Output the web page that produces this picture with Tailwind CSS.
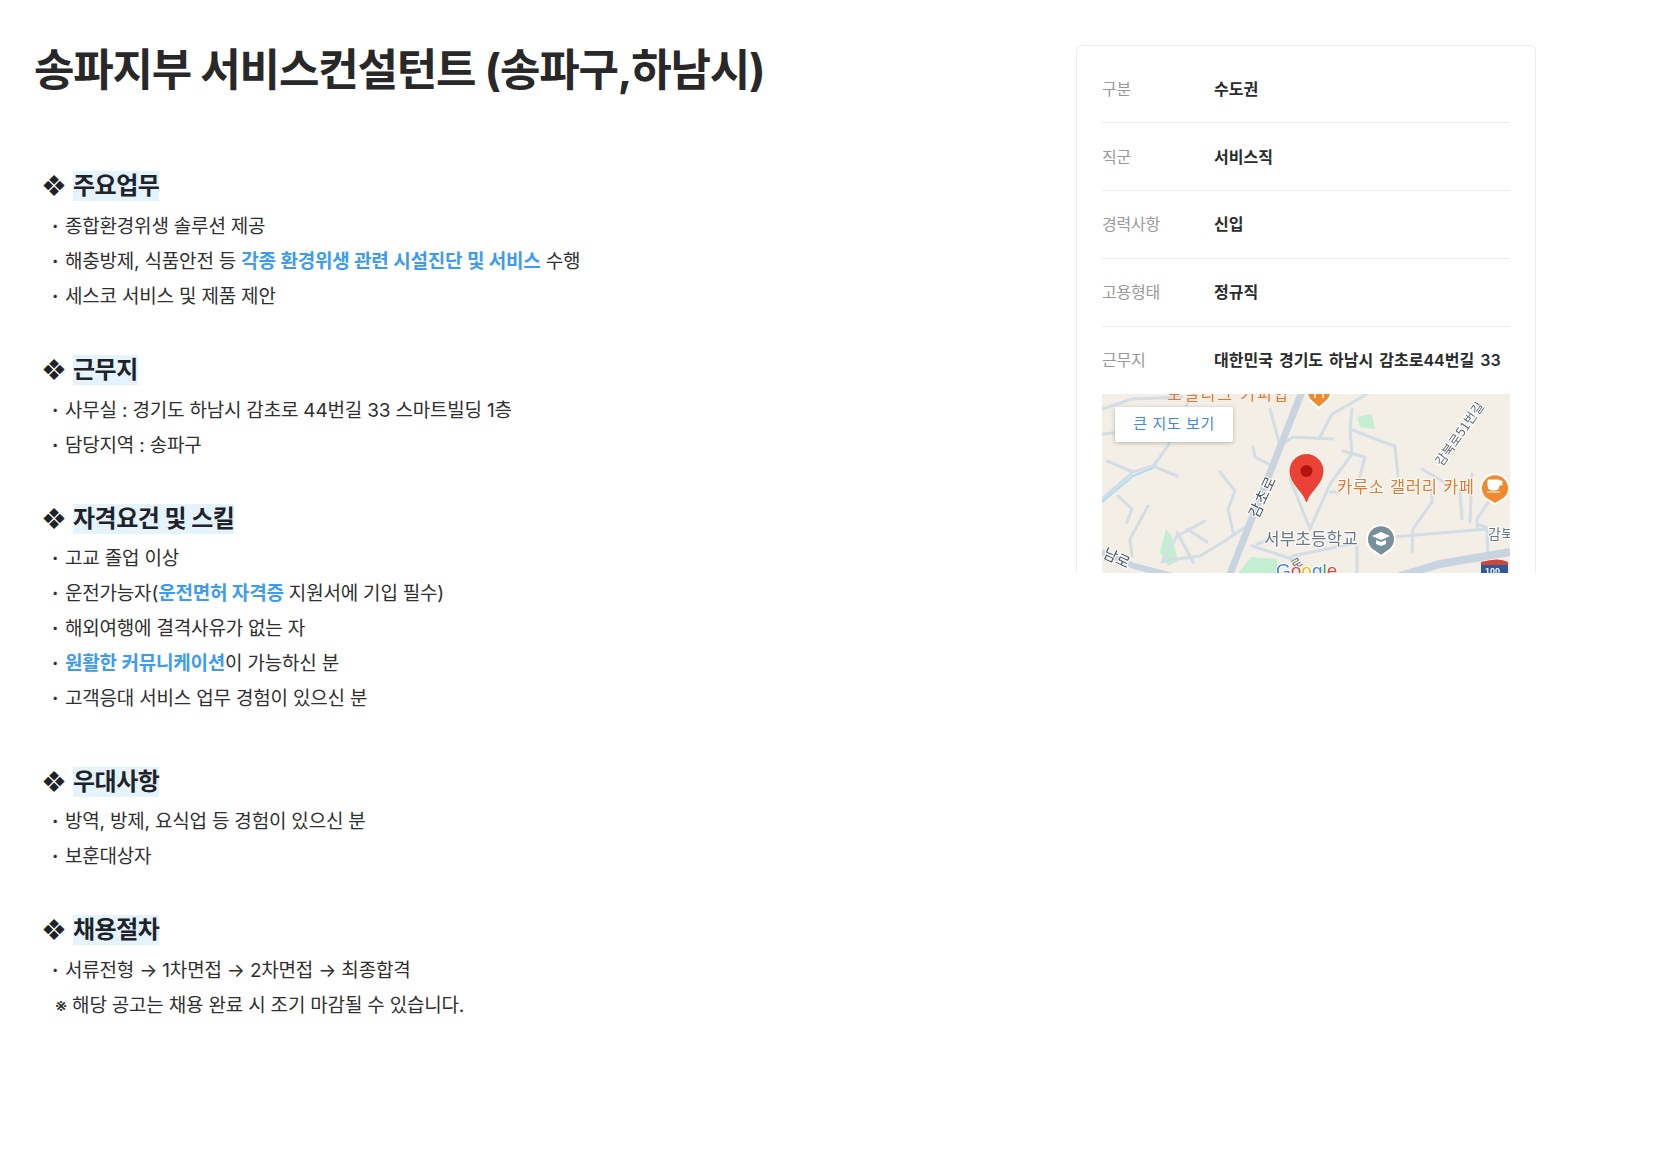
<!DOCTYPE html>
<html lang="ko">
<head>
    <meta charset="UTF-8">
    <title>송파지부 서비스컨설턴트</title>
    <script src="https://cdn.jsdelivr.net/npm/@tailwindcss/browser@4"></script>
</head>
<body class="bg-white text-[#2f2f2f] font-['Inter','Noto_Sans_CJK_KR',sans-serif]">
    <div class="flex items-start h-[1176px] overflow-hidden">
        <!-- 공고 본문 -->
        <main class="w-[1076px] shrink-0 pl-[36px] pt-[38px]">
            <h1 class="-ml-[2px] text-[44px] leading-[64px] font-bold tracking-[-1.2px] text-[#282828]">송파지부 서비스컨설턴트 (송파구,하남시)</h1>

            <section class="pt-[69px]">
                <h2 class="flex items-center h-[30px] pl-[5px] text-[24px] font-bold text-[#1f2328] tracking-[-0.5px]">
                    <span class="w-[32px] font-['DejaVu_Sans'] text-[29px] leading-none">❖</span>
                    <span class="bg-[#e5f3fe] leading-[30px]">주요업무</span>
                </h2>
                <ul class="mt-[8px] text-[19px] leading-[35px] tracking-[-0.2px]">
                    <li class="flex"><span class="w-[29px] pl-[16px] font-bold">·</span><span>종합환경위생 솔루션 제공</span></li>
                    <li class="flex"><span class="w-[29px] pl-[16px] font-bold">·</span><span>해충방제, 식품안전 등 <b class="font-semibold text-[#3c9cf2]">각종 환경위생 관련 시설진단 및 서비스</b> 수행</span></li>
                    <li class="flex"><span class="w-[29px] pl-[16px] font-bold">·</span><span>세스코 서비스 및 제품 제안</span></li>
                </ul>
            </section>

            <section class="pt-[41px]">
                <h2 class="flex items-center h-[30px] pl-[5px] text-[24px] font-bold text-[#1f2328] tracking-[-0.5px]">
                    <span class="w-[32px] font-['DejaVu_Sans'] text-[29px] leading-none">❖</span>
                    <span class="bg-[#e5f3fe] leading-[30px]">근무지</span>
                </h2>
                <ul class="mt-[8px] text-[19px] leading-[35px] tracking-[-0.2px]">
                    <li class="flex"><span class="w-[29px] pl-[16px] font-bold">·</span><span>사무실 : 경기도 하남시 감초로 44번길 33 스마트빌딩 1층</span></li>
                    <li class="flex"><span class="w-[29px] pl-[16px] font-bold">·</span><span>담당지역 : 송파구</span></li>
                </ul>
            </section>

            <section class="pt-[41px]">
                <h2 class="flex items-center h-[30px] pl-[5px] text-[24px] font-bold text-[#1f2328] tracking-[-0.5px]">
                    <span class="w-[32px] font-['DejaVu_Sans'] text-[29px] leading-none">❖</span>
                    <span class="bg-[#e5f3fe] leading-[30px]">자격요건 및 스킬</span>
                </h2>
                <ul class="mt-[7px] text-[19px] leading-[35px] tracking-[-0.2px]">
                    <li class="flex"><span class="w-[29px] pl-[16px] font-bold">·</span><span>고교 졸업 이상</span></li>
                    <li class="flex"><span class="w-[29px] pl-[16px] font-bold">·</span><span>운전가능자(<b class="font-semibold text-[#3c9cf2]">운전면허 자격증</b> 지원서에 기입 필수)</span></li>
                    <li class="flex"><span class="w-[29px] pl-[16px] font-bold">·</span><span>해외여행에 결격사유가 없는 자</span></li>
                    <li class="flex"><span class="w-[29px] pl-[16px] font-bold">·</span><span><b class="font-semibold text-[#3c9cf2]">원활한 커뮤니케이션</b>이 가능하신 분</span></li>
                    <li class="flex"><span class="w-[29px] pl-[16px] font-bold">·</span><span>고객응대 서비스 업무 경험이 있으신 분</span></li>
                </ul>
            </section>

            <section class="pt-[51px]">
                <h2 class="flex items-center h-[30px] pl-[5px] text-[24px] font-bold text-[#1f2328] tracking-[-0.5px]">
                    <span class="w-[32px] font-['DejaVu_Sans'] text-[29px] leading-none">❖</span>
                    <span class="bg-[#e5f3fe] leading-[30px]">우대사항</span>
                </h2>
                <ul class="mt-[7px] text-[19px] leading-[35px] tracking-[-0.2px]">
                    <li class="flex"><span class="w-[29px] pl-[16px] font-bold">·</span><span>방역, 방제, 요식업 등 경험이 있으신 분</span></li>
                    <li class="flex"><span class="w-[29px] pl-[16px] font-bold">·</span><span>보훈대상자</span></li>
                </ul>
            </section>

            <section class="pt-[41px]">
                <h2 class="flex items-center h-[30px] pl-[5px] text-[24px] font-bold text-[#1f2328] tracking-[-0.5px]">
                    <span class="w-[32px] font-['DejaVu_Sans'] text-[29px] leading-none">❖</span>
                    <span class="bg-[#e5f3fe] leading-[30px]">채용절차</span>
                </h2>
                <ul class="mt-[8px] text-[19px] leading-[35px] tracking-[-0.2px]">
                    <li class="flex"><span class="w-[29px] pl-[16px] font-bold">·</span><span>서류전형 → 1차면접 → 2차면접 → 최종합격</span></li>
                    <li class="pl-[19px]">※ 해당 공고는 채용 완료 시 조기 마감될 수 있습니다.</li>
                </ul>
            </section>
        </main>

        <!-- 공고 요약 카드 -->
        <aside class="w-[460px] h-[528px] mt-[45px] overflow-hidden shrink-0 border border-b-0 border-[#ececec] rounded-t-[6px] px-[25px] pt-[9px]">
            <dl class="text-[16px] tracking-[-0.2px]">
                <div class="flex items-center h-[68px] border-b border-[#ececec]">
                    <dt class="w-[112px] text-[#999999]">구분</dt><dd class="font-semibold text-[#2b2b2b] tracking-normal">수도권</dd>
                </div>
                <div class="flex items-center h-[68px] border-b border-[#ececec]">
                    <dt class="w-[112px] text-[#999999]">직군</dt><dd class="font-semibold text-[#2b2b2b] tracking-normal">서비스직</dd>
                </div>
                <div class="flex items-center h-[68px] pb-[2px] border-b border-[#ececec]">
                    <dt class="w-[112px] text-[#999999]">경력사항</dt><dd class="font-semibold text-[#2b2b2b] tracking-normal">신입</dd>
                </div>
                <div class="flex items-center h-[68px] pb-[2px] border-b border-[#ececec]">
                    <dt class="w-[112px] text-[#999999]">고용형태</dt><dd class="font-semibold text-[#2b2b2b] tracking-normal">정규직</dd>
                </div>
                <div class="flex items-center h-[67px] pb-[2px]">
                    <dt class="w-[112px] text-[#999999]">근무지</dt><dd class="font-semibold text-[#2b2b2b] tracking-normal [word-spacing:2px] whitespace-nowrap">대한민국 경기도 하남시 감초로44번길 33</dd>
                </div>
            </dl>
            <div class="relative w-[408px] h-[180px] overflow-hidden bg-[#f4efe6]">
                <svg class="absolute inset-0 blur-[0.5px]" width="408" height="180" viewBox="0 0 408 180" font-family="'Noto Sans CJK KR',sans-serif">
                    <!-- 공원 -->
                    <g fill="#c4eed2">
                        <path d="M255 23l15-3 3 15-15-2z"/>
                        <path d="M64 135l6 8 6 24-10 5-8-14z"/>
                        <path d="M137 178l12-15 26 2 0 15h-38z"/>
                    </g>
                    <!-- 하천 -->
                    <path d="M0 108L31 82L51 74L70 45" fill="none" stroke="#a9dcf0" stroke-width="2"/>
                    <!-- 도로 -->
                    <g fill="none" stroke="#d2dde6" stroke-width="3" stroke-linecap="round" stroke-linejoin="round">
                        <path d="M0 105L31 78L51 72L66 52L85 10"/>
                        <path d="M5 67L31 78M51 72L75 82M16 102L30 115L25 128M46 112L28 145L30 162"/>
                        <path d="M118 78L133 97L126 115L131 138M103 127L75 142L60 168M145 132L121 148L98 162L61 167M75 138L91 168M85 135L105 148"/>
                        <path d="M151 53L153 63L170 72M178 52L191 43L231 45M217 45L230 20L248 10L265 0M188 85L208 135L228 90L250 60L248 35L250 15"/>
                        <path d="M248 35L281 48L293 52L296 82M241 57L263 63L258 82M228 98L235 98M310 158L311 135L330 108L330 90M291 143L385 135M358 98L360 125M370 80L368 128"/>
                        <path d="M385 135L386 165M375 130L408 142M395 95L375 125L375 135M178 52L168 15M320 75L345 90"/>
                        <path d="M150 152L190 165M175 143L155 150M255 150L255 180M190 162L250 150M0 15L30 5L80 3M0 40L20 38M25 20L60 25"/>
                    </g>
                    <path d="M201 -5L126 185" stroke="#c8d4df" stroke-width="7" fill="none"/>
                    <path d="M298 182L338 170L408 158" stroke="#c8d4df" stroke-width="8" fill="none"/>
                    <path d="M0 158L32 172L70 182" stroke="#c8d4df" stroke-width="6" fill="none"/>
                    <!-- 지도 라벨 -->
                    <text x="65" y="6" font-size="16" fill="#e8762c" letter-spacing="2">모델리크 커피합</text>
                    <text transform="translate(156,125) rotate(-65)" font-size="15" fill="#4a5661" stroke="#fff" stroke-width="2" paint-order="stroke" letter-spacing="1">감초로</text>
                    <text transform="translate(340,73) rotate(-55)" font-size="13" fill="#5f6b76" stroke="#fff" stroke-width="2" paint-order="stroke">감북로51번길</text>
                    <text x="235" y="99" font-size="16.500" fill="#e8762c" stroke="#fff" stroke-width="2" paint-order="stroke" letter-spacing="0.7">카루소 갤러리 카페</text>
                    <text x="162" y="151" font-size="17" fill="#6b7883" stroke="#fff" stroke-width="2" paint-order="stroke">서부초등학교</text>
                    <text x="386" y="145" font-size="14" fill="#6b7883" stroke="#fff" stroke-width="2" paint-order="stroke">감북</text>
                    <text transform="translate(0,163) rotate(25)" font-size="15" fill="#4a5661" stroke="#fff" stroke-width="2" paint-order="stroke">남로</text>
                    <text transform="translate(192,176) rotate(-30)" font-size="12" fill="#5f6b76">로</text>
                    <!-- 구글 로고 -->
                    <text x="174" y="183" font-family="'Liberation Sans',sans-serif" font-size="19" stroke="#fff" stroke-width="2" paint-order="stroke"><tspan fill="#4285f4">G</tspan><tspan fill="#ea4335">o</tspan><tspan fill="#fbbc05">o</tspan><tspan fill="#4285f4">g</tspan><tspan fill="#34a853">l</tspan><tspan fill="#ea4335">e</tspan></text>
                    <!-- 장소 아이콘 -->
                    <path d="M217 14L208 6A12 12 0 1 1 226 6z" fill="#f08a2c" stroke="#fff" stroke-width="2"/>
                    <path d="M213 -2v6M221 -2v6" stroke="#fff" stroke-width="1.500"/>
                    <path d="M393 110l-10-6a14 14 0 1 1 20 0z" fill="#f08a2c" stroke="#fff" stroke-width="2"/>
                    <path d="M386 86h11v6a4 4 0 0 1-4 4h-3a4 4 0 0 1-4-4zM397 87h3v4h-3M385 98h13" fill="#fff" stroke="#fff"/>
                    <path d="M279 162l-10-7a14 14 0 1 1 20 0z" fill="#78909c" stroke="#fff" stroke-width="2"/>
                    <path d="M270 142l9-4 9 4-9 4zM274 146v4l5 2 5-2v-4l-5 2z" fill="#fff"/>
                    <!-- 고속도로 표지 -->
                    <path d="M379 170q18-5 27 0v12h-27z" fill="#2e5a9c"/>
                    <path d="M379 168q18-5 27 0v3h-27z" fill="#c9473c"/>
                    <text x="383" y="180" font-size="9" fill="#fff" font-family="'Liberation Sans',sans-serif" font-weight="700">100</text>
                    <!-- 마커 -->
                    <path d="M204.500 108C202 98 188 90 188 77a16.500 16.500 0 0 1 33 0C221 90 207 98 204.500 108z" fill="#ea4335" stroke="#d8322a" stroke-width="0.8"/>
                    <circle cx="204.500" cy="77" r="6" fill="#b3140f"/>
                </svg>
                <a class="absolute left-[13px] top-[13px] flex items-center justify-center w-[118px] h-[35px] bg-white rounded-[2px] shadow-[0_1px_4px_rgba(0,0,0,0.25)] text-[15px] tracking-[0.6px] text-[#3f86ee]">큰 지도 보기</a>
            </div>
        </aside>
    </div>
</body>
</html>
